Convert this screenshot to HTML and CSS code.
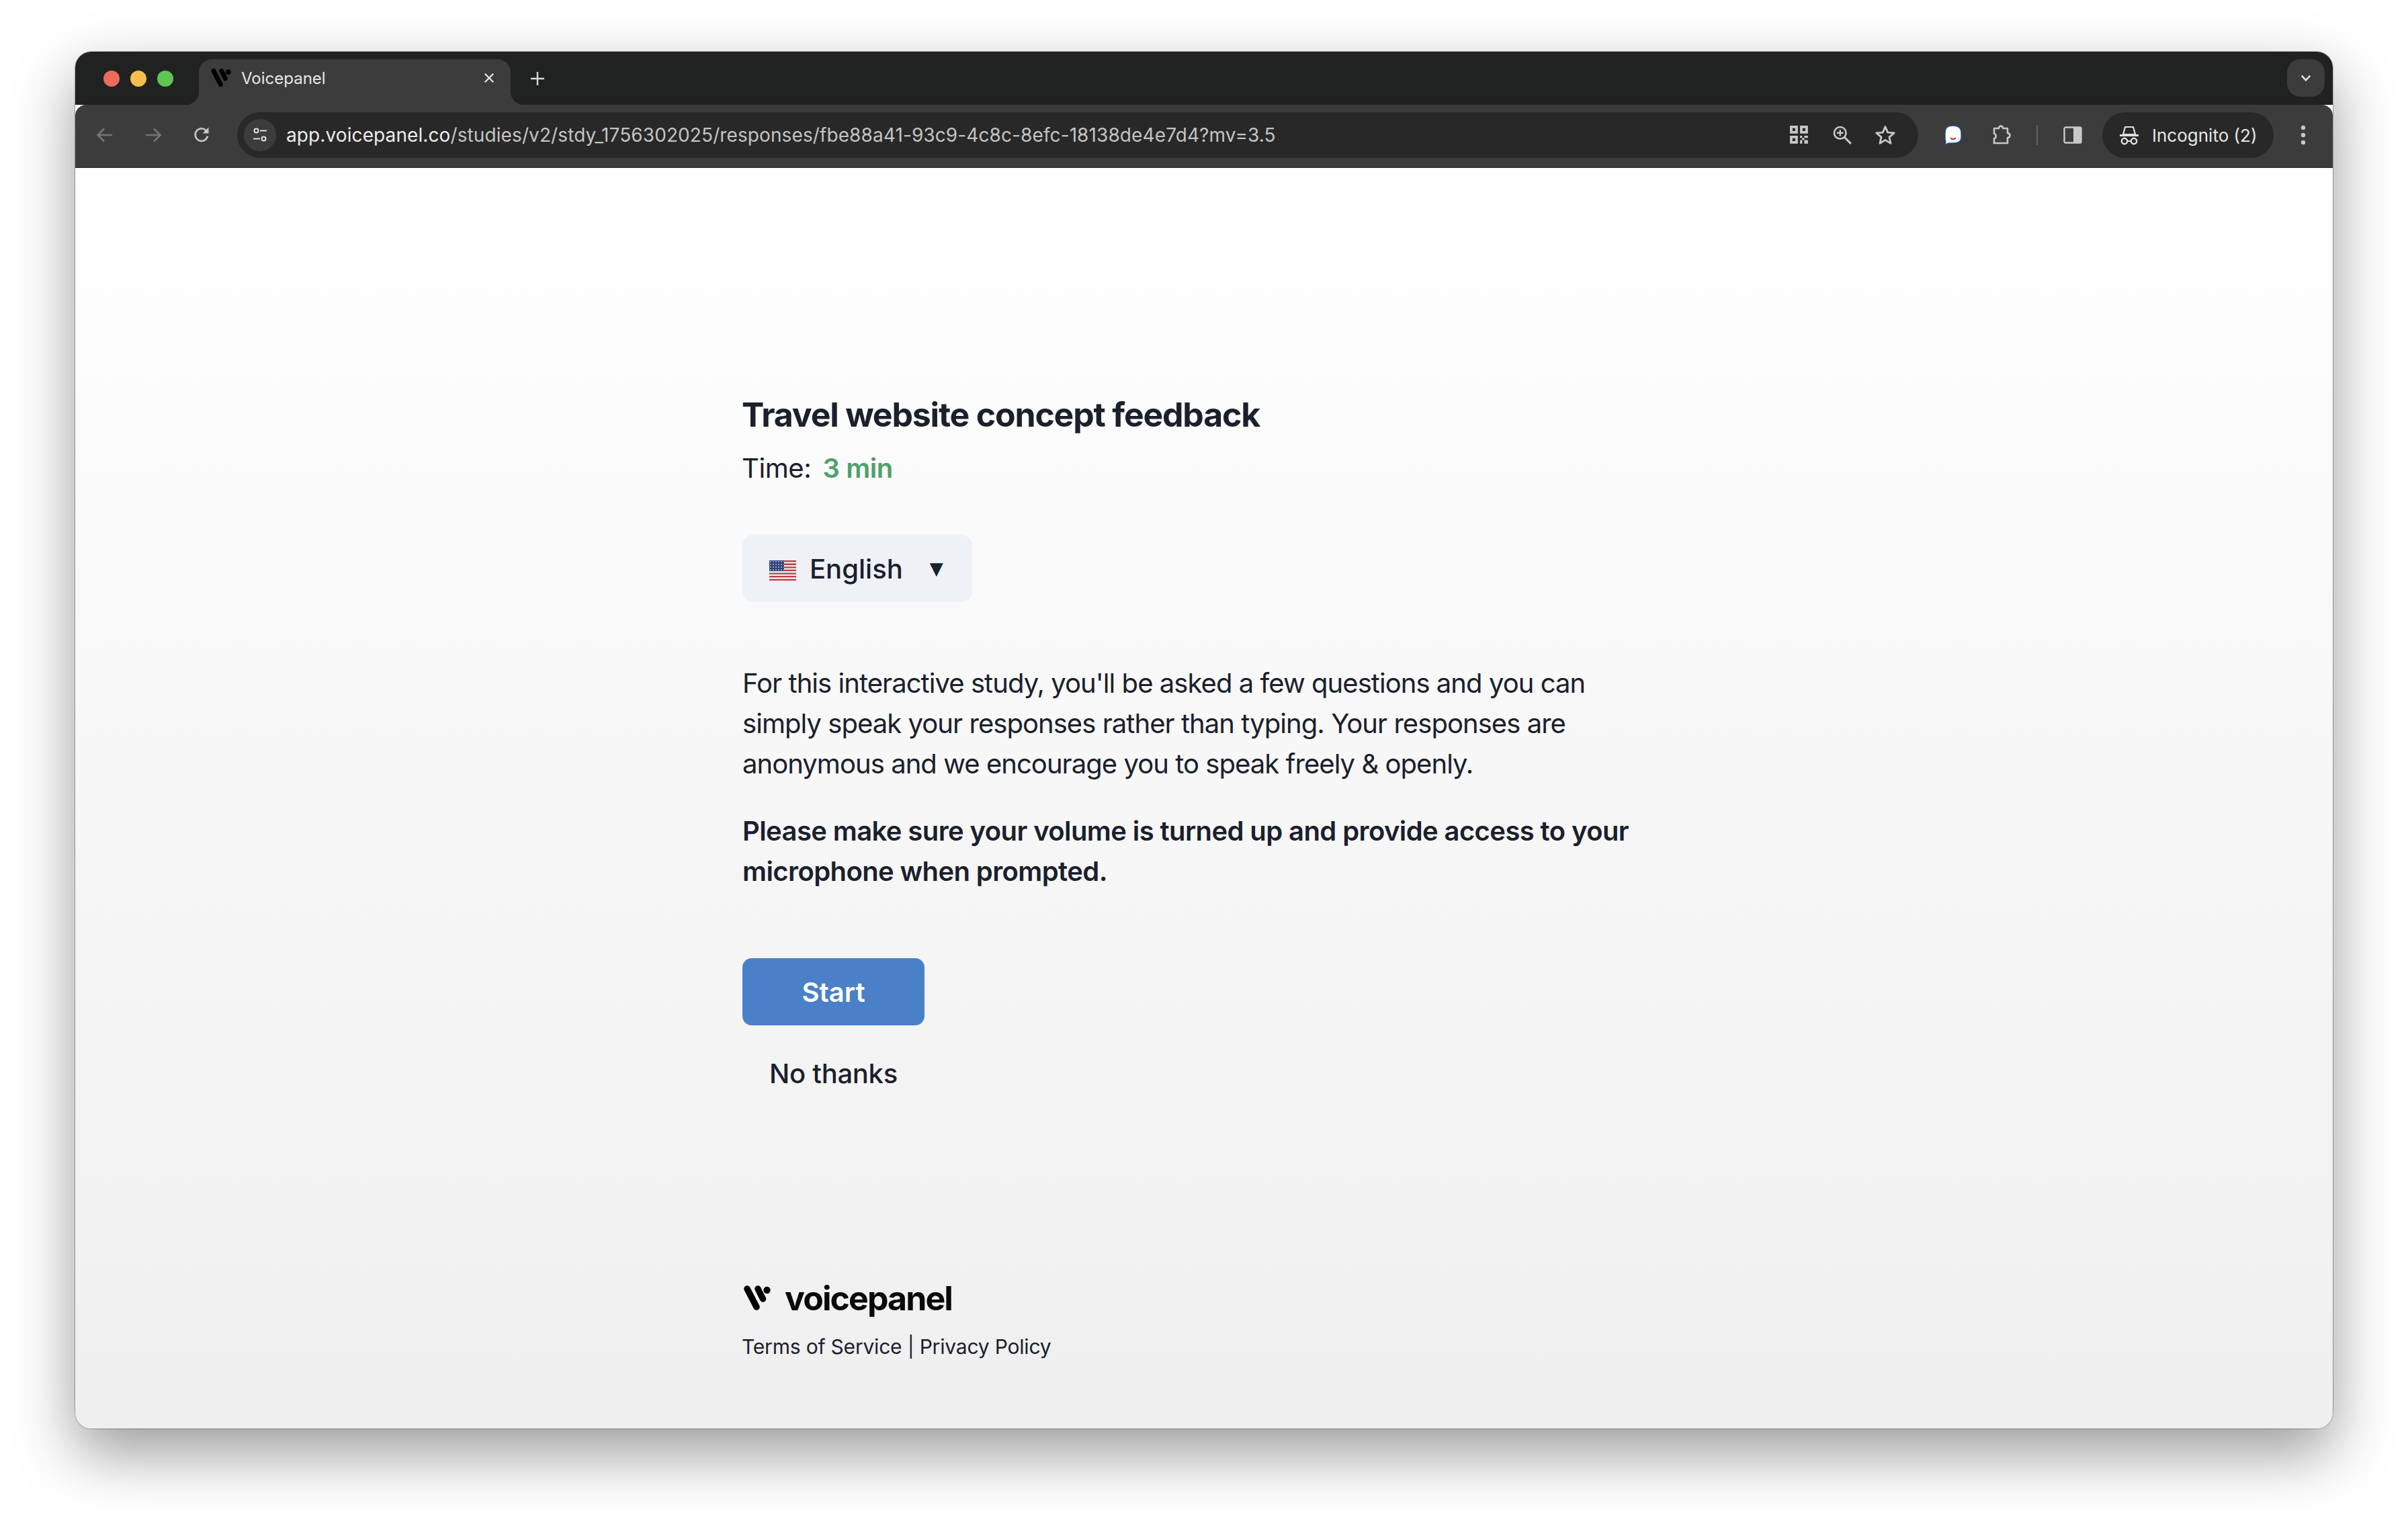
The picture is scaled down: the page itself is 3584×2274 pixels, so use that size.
FILE: index.html
```html
<!DOCTYPE html>
<html lang="en">

<head>
    <meta charset="UTF-8" />
    <title>Voicepanel</title>
    <link rel="stylesheet" href="styles.css">
</head>

<body>
    <div class="window">
        <div class="tabstrip">
            <div class="lights">
                <span class="light red"></span>
                <span class="light yellow"></span>
                <span class="light green"></span>
            </div>
            <div class="tab">
                <svg class="favicon" viewBox="0 0 40 38">
                    <path d="M5 5L19 32M21 5L28.5 20" stroke="#000" stroke-width="9.5" stroke-linecap="round" fill="none" />
                    <circle cx="34.5" cy="7" r="5.2" fill="#000" />
                </svg>
                <span class="tab-title">Voicepanel</span>
                <svg class="tab-close" viewBox="0 0 16 16">
                    <path d="M3 3L13 13M13 3L3 13" stroke="#e4e4e4" stroke-width="1.9" fill="none" />
                </svg>
            </div>
            <svg class="new-tab" viewBox="0 0 22 22">
                <path d="M11 1V21M1 11H21" stroke="#d8d8d8" stroke-width="2.4" fill="none" />
            </svg>
            <div class="tab-search">
                <svg viewBox="0 0 16 16" width="18" height="18">
                    <path d="M2.5 5L8 11L13.5 5" stroke="#e4e4e4" stroke-width="2.2" fill="none" />
                </svg>
            </div>
        </div>

        <div class="toolbar">
            <span class="tool">
                <svg viewBox="0 0 28 28" width="28" height="28">
                    <path d="M25 14H4M13 4.5L3.5 14L13 23.5" stroke="#757575" stroke-width="2.6" fill="none" />
                </svg>
            </span>
            <span class="tool">
                <svg viewBox="0 0 28 28" width="28" height="28">
                    <path d="M3 14H24M15 4.5L24.5 14L15 23.5" stroke="#757575" stroke-width="2.6" fill="none" />
                </svg>
            </span>
            <span class="tool">
                <svg viewBox="0 0 28 28" width="28" height="28">
                    <path d="M23 15.5A9.3 9.3 0 1 1 20.5 7L23.5 10" stroke="#c8c8c8" stroke-width="2.6" fill="none" />
                    <path d="M24.5 2.5V11.5H15.5Z" fill="#c8c8c8" />
                </svg>
            </span>

            <div class="omnibox">
                <span class="site-chip">
                    <svg viewBox="0 0 24 24" width="24" height="24">
                        <circle cx="6.5" cy="5.5" r="3" stroke="#e0e0e0" stroke-width="2" fill="none" />
                        <path d="M12 5.5H22M2 17.5H12" stroke="#e0e0e0" stroke-width="2" fill="none" />
                        <circle cx="17.5" cy="17.5" r="3" stroke="#e0e0e0" stroke-width="2" fill="none" />
                    </svg>
                </span>
                <span class="url">app.voicepanel.co<span class="url-path">/studies/v2/stdy_1756302025/responses/fbe88a41-93c9-4c8c-8efc-18138de4e7d4?mv=3.5</span></span>
                <span class="omni-icons">
                    <span class="tool">
                        <svg viewBox="0 0 28 28" width="30" height="30">
                            <path d="M1 1H12V12H1ZM15 1H26V12H15ZM1 15H12V26H1Z" fill="#c8c8c8" />
                            <path d="M4.5 4.5H8.5V8.5H4.5ZM18.5 4.5H22.5V8.5H18.5ZM4.5 18.5H8.5V22.5H4.5Z" fill="#282828" />
                            <path d="M15 15H18V18H15ZM21 15H26V18H21ZM18 18H21V21H18ZM15 21H18V26H15ZM21 21H26V26H21Z" fill="#c8c8c8" />
                        </svg>
                    </span>
                    <span class="tool">
                        <svg viewBox="0 0 28 28" width="30" height="30">
                            <circle cx="11" cy="11" r="8.2" stroke="#c8c8c8" stroke-width="2.4" fill="none" />
                            <path d="M17 17L26 26" stroke="#c8c8c8" stroke-width="2.8" fill="none" />
                            <path d="M11 6.5V15.5M6.5 11H15.5" stroke="#c8c8c8" stroke-width="2.2" fill="none" />
                        </svg>
                    </span>
                    <span class="tool">
                        <svg viewBox="0 0 28 28" width="32" height="32">
                            <path d="M14 3L17.2 10.6L25.5 11.3L19.2 16.7L21.1 24.8L14 20.5L6.9 24.8L8.8 16.7L2.5 11.3L10.8 10.6Z" stroke="#c8c8c8" stroke-width="2.4" stroke-linejoin="round" fill="none" />
                        </svg>
                    </span>
                </span>
            </div>

            <span class="tool">
                <svg viewBox="0 0 28 32" width="28" height="32">
                    <path d="M14 2C22 2 26 5 26 13V20C26 26 22 28 14 28H7L2.5 30.5L3 26C2 24 2 22 2 20V13C2 5 6 2 14 2Z" fill="#fff" stroke="#1d4f8c" stroke-width="1.4" />
                    <path d="M10 20C12 23 16 23 18 20" stroke="#c9302c" stroke-width="2" fill="none" />
                </svg>
            </span>
            <span class="tool">
                <svg viewBox="0 0 32 32" width="32" height="32">
                    <path d="M5 6H12C12 1.5 18 1.5 18 6H25V13C29.5 13 29.5 20 25 20V28H5V21C8.5 21 8.5 14 5 14Z" stroke="#c8c8c8" stroke-width="2.6" stroke-linejoin="round" fill="none" />
                </svg>
            </span>
            <span class="divider"></span>
            <span class="tool">
                <svg viewBox="0 0 28 28" width="28" height="28">
                    <rect x="1.5" y="2.5" width="25" height="23" rx="2" stroke="#c8c8c8" stroke-width="2.4" fill="none" />
                    <rect x="15" y="2.5" width="11.5" height="23" fill="#c8c8c8" />
                </svg>
            </span>
            <div class="incognito">
                <svg viewBox="0 0 30 30" width="30" height="30">
                    <path d="M9 3H21L24 14H6Z" stroke="#e0e0e0" stroke-width="2.2" fill="none" />
                    <path d="M1 15.5H29" stroke="#e0e0e0" stroke-width="2.8" fill="none" />
                    <circle cx="8" cy="24" r="4.2" stroke="#e0e0e0" stroke-width="2.4" fill="none" />
                    <circle cx="22" cy="24" r="4.2" stroke="#e0e0e0" stroke-width="2.4" fill="none" />
                    <path d="M12 24H18" stroke="#e0e0e0" stroke-width="2.2" fill="none" />
                </svg>
                <span>Incognito (2)</span>
            </div>
            <span class="tool">
                <svg viewBox="0 0 8 32" width="8" height="32">
                    <circle cx="4" cy="5" r="3.2" fill="#c8c8c8" />
                    <circle cx="4" cy="16" r="3.2" fill="#c8c8c8" />
                    <circle cx="4" cy="27" r="3.2" fill="#c8c8c8" />
                </svg>
            </span>
        </div>

        <main class="page">
            <h1 class="title">Travel website concept feedback</h1>
            <p class="time">Time:<b class="time-value">3 min</b></p>

            <button class="lang" type="button">
                <svg class="flag" viewBox="0 0 40 30" preserveAspectRatio="none">
                    <defs>
                        <pattern id="stars" width="4" height="4" patternUnits="userSpaceOnUse">
                            <rect width="4" height="4" fill="#2f3f78" />
                            <circle cx="2" cy="2" r="0.9" fill="#c9cfe2" />
                        </pattern>
                    </defs>
                    <rect width="40" height="30" fill="#f3f0f0" />
                    <path d="M0 0H40V2.3H0ZM0 4.6H40V6.9H0ZM0 9.2H40V11.5H0ZM0 13.8H40V16.1H0ZM0 18.4H40V20.7H0ZM0 23H40V25.3H0ZM0 27.7H40V30H0Z" fill="#bb3f47" />
                    <rect width="22" height="16" fill="url(#stars)" />
                </svg>
                <span class="lang-name">English</span>
                <span class="lang-arrow">▼</span>
            </button>

            <p class="intro">For this interactive study, you'll be asked a few questions and you can simply speak your responses rather than typing. Your responses are anonymous and we encourage you to speak freely &amp; openly.</p>
            <p class="notice">Please make sure your volume is turned up and provide access to your microphone when prompted.</p>

            <div class="actions">
                <button class="start" type="button">Start</button>
                <button class="decline" type="button">No thanks</button>
            </div>

            <footer class="foot">
                <div class="brand">
                    <svg class="brand-mark" viewBox="0 0 40 38">
                        <path d="M5 5L19 32M21 5L28.5 20" stroke="#000" stroke-width="9.5" stroke-linecap="round" fill="none" />
                        <circle cx="34.5" cy="7" r="5.2" fill="#000" />
                    </svg>
                    <span class="brand-name">voicepanel</span>
                </div>
                <p class="legal">Terms of Service | Privacy Policy</p>
            </footer>
        </main>
    </div>
</body>

</html>
```

FILE: styles.css
```css
* {
    box-sizing: border-box;
}

html,
body {
    margin: 0;
    height: 100%;
}

body {
    background-color: #ffffff;
    padding: 77px 112px 148px;
    font-family: "Inter", "Liberation Sans", sans-serif;
    color: #1a202c;
    overflow: hidden;
}

.window {
    height: 2049px;
    display: flex;
    flex-direction: column;
    border-radius: 24px;
    overflow: hidden;
    box-shadow: 0 0 0 1px rgba(0, 0, 0, 0.28), 0 36px 90px rgba(0, 0, 0, 0.4);
}

/* tab strip */
.tabstrip {
    height: 79px;
    flex-shrink: 0;
    display: flex;
    align-items: flex-start;
    padding: 11px 12px 0 42px;
    background-color: #202221;
}

.lights {
    display: flex;
    gap: 16px;
    margin: 17px 38px 0 0;
}

.light {
    width: 24px;
    height: 24px;
    border-radius: 50%;
}

.red {
    background-color: #ed6a5e;
}

.yellow {
    background-color: #f4bf4f;
}

.green {
    background-color: #61c554;
}

.tab {
    position: relative;
    width: 464px;
    height: 68px;
    display: flex;
    align-items: center;
    padding: 0 22px 12px 18px;
    background-color: #3c3c3c;
    border-radius: 20px 20px 0 0;
}

.tab::before,
.tab::after {
    content: "";
    position: absolute;
    bottom: 0;
    width: 20px;
    height: 20px;
}

.tab::before {
    left: -20px;
    background: radial-gradient(circle at 0 0, transparent 20px, #3c3c3c 20.5px);
}

.tab::after {
    right: -20px;
    background: radial-gradient(circle at 100% 0, transparent 20px, #3c3c3c 20.5px);
}

.favicon {
    width: 30px;
    height: 28px;
    flex-shrink: 0;
}

.tab-title {
    margin-left: 15px;
    flex: 1;
    font-size: 24px;
    color: #e6e6e6;
}

.tab-close {
    width: 20px;
    height: 20px;
}

.new-tab {
    width: 22px;
    height: 22px;
    margin: 18px 0 0 29px;
}

.tab-search {
    width: 56px;
    height: 56px;
    margin-left: auto;
    display: flex;
    align-items: center;
    justify-content: center;
    background-color: #3c3c3c;
    border-radius: 20px;
}

/* toolbar */
.toolbar {
    height: 94px;
    flex-shrink: 0;
    display: flex;
    align-items: center;
    gap: 16px;
    padding: 0 16px 2px;
    background-color: #3c3c3c;
    border-bottom: 2px solid #333333;
    border-radius: 16px 16px 0 0;
}

.tool {
    width: 56px;
    height: 56px;
    flex-shrink: 0;
    display: flex;
    align-items: center;
    justify-content: center;
}

.omnibox {
    flex: 1;
    height: 68px;
    margin: 0 8px 0 9px;
    display: flex;
    align-items: center;
    padding: 0 21px 0 10px;
    background-color: #282828;
    border-radius: 34px;
}

.site-chip {
    width: 48px;
    height: 48px;
    display: flex;
    align-items: center;
    justify-content: center;
    background-color: #3c3c3c;
    border-radius: 50%;
}

.url {
    margin-left: 15px;
    font-size: 28px;
    letter-spacing: 0.1px;
    color: #ececec;
}

.url-path {
    color: #c4c4c4;
}

.omni-icons {
    margin-left: auto;
    display: flex;
    gap: 8px;
}

.divider {
    width: 2px;
    height: 30px;
    margin: 0 8px;
    background-color: #606060;
}

.incognito {
    width: 255px;
    height: 68px;
    display: flex;
    align-items: center;
    gap: 19px;
    padding-left: 25px;
    background-color: #282828;
    border-radius: 34px;
    font-size: 26px;
    color: #e6e6e6;
}

/* page */
.page {
    flex: 1;
    padding: 337px 0 0 993px;
    background: linear-gradient(#ffffff, #efefef);
}

.title {
    margin: 0 0 0 -1px;
    font-size: 50px;
    font-weight: 650;
    line-height: 60px;
    letter-spacing: -1.2px;
}

.time {
    margin: 20px 0 0 -1px;
    font-size: 40px;
    line-height: 60px;
    letter-spacing: -0.4px;
}

.time-value {
    margin-left: 17px;
    font-weight: 600;
    color: #4fa06b;
}

.lang {
    width: 342px;
    height: 100px;
    margin-top: 69px;
    display: flex;
    align-items: center;
    padding: 0 0 0 40px;
    border: none;
    border-radius: 16px;
    background-color: #eef1f6;
    font-family: inherit;
    color: #1a202c;
}

.flag {
    width: 40px;
    height: 30px;
    margin-top: 6px;
}

.lang-name {
    margin-left: 20px;
    font-size: 40px;
    font-weight: 500;
}

.lang-arrow {
    margin-left: 40px;
    font-family: "DejaVu Sans", sans-serif;
    font-size: 26px;
}

.intro,
.notice {
    font-size: 40px;
    line-height: 60px;
}

.intro {
    width: 1320px;
    margin: 91px 0 0;
    letter-spacing: -0.95px;
}

.notice {
    width: 1340px;
    margin: 40px 0 0;
    font-weight: 600;
    letter-spacing: -0.6px;
}

.actions {
    width: 271px;
    margin-top: 99px;
}

.start,
.decline {
    display: block;
    width: 100%;
    border: none;
    font-family: inherit;
    font-size: 40px;
}

.start {
    height: 100px;
    border-radius: 14px;
    background-color: #4a80c8;
    color: #ffffff;
    font-weight: 600;
}

.decline {
    height: 100px;
    margin-top: 21px;
    background: none;
    color: #1a202c;
    font-weight: 500;
    letter-spacing: -0.3px;
}

.foot {
    margin-top: 255px;
}

.brand {
    display: flex;
    align-items: center;
    gap: 21px;
}

.brand-mark {
    width: 40px;
    height: 38px;
    margin-left: 2px;
}

.brand-name {
    font-size: 50px;
    font-weight: 700;
    letter-spacing: -1.9px;
    line-height: 60px;
    color: #0a0a0a;
}

.legal {
    margin: 20px 0 0 -1px;
    font-size: 30px;
    line-height: 44px;
    letter-spacing: -0.2px;
}
```
